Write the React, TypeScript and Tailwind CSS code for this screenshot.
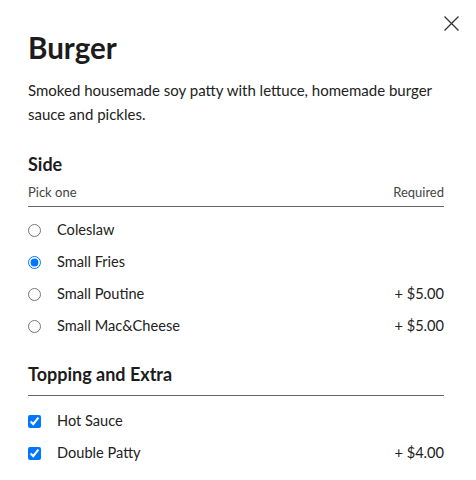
import React from "react";

function Row({ type, label, price, checked, name }: { type: "radio" | "checkbox"; label: string; price?: string; checked?: boolean; name?: string }) {
  return (
    <label className="flex items-center h-8 text-[14.6px] text-[#222]">
      <input type={type} name={name} defaultChecked={checked} className="w-[13px] h-[13px] shrink-0" />
      <span className="ml-4 flex-1">{label}</span>
      {price && <span>{price}</span>}
    </label>
  );
}

export default function App() {
  return (
    <div className="w-[476px] h-[480px] bg-white relative" style={{ fontFamily: "Lato, 'Noto Sans', sans-serif" }}>
      <button className="absolute left-[444px] top-[16px] w-[15px] h-[15px]" aria-label="Close">
        <svg width="15" height="15" viewBox="0 0 15 15" stroke="#333" strokeWidth="1.3" fill="none">
          <path d="M0.5 0.5L14.5 14.5M14.5 0.5L0.5 14.5" />
        </svg>
      </button>
      <div className="pl-7 pr-8 pt-[28px]">
        <h1 className="text-[29.5px] font-bold text-[#1c1c1c] leading-[40px]">Burger</h1>
        <p className="mt-[10px] text-[15px] leading-[24px] text-[#222]">
          Smoked housemade soy patty with lettuce, homemade burger sauce and pickles.
        </p>
        <div className="mt-[26px]">
          <h2 className="text-[18px] font-bold text-[#1c1c1c] leading-6">Side</h2>
          <div className="flex justify-between text-[13px] text-[#444] leading-5 mt-[6px] pb-[4px] border-b border-[#666]">
            <span>Pick one</span>
            <span>Required</span>
          </div>
          <div className="mt-[7px]">
            <Row type="radio" name="side" label="Coleslaw" />
            <Row type="radio" name="side" label="Small Fries" checked />
            <Row type="radio" name="side" label="Small Poutine" price="+ $5.00" />
            <Row type="radio" name="side" label="Small Mac&Cheese" price="+ $5.00" />
          </div>
        </div>
        <div className="mt-[20px]">
          <h2 className="text-[18px] font-bold text-[#1c1c1c] leading-6 pb-[9px] border-b border-[#666]">Topping and Extra</h2>
          <div className="mt-[9px]">
            <Row type="checkbox" label="Hot Sauce" checked />
            <Row type="checkbox" label="Double Patty" price="+ $4.00" checked />
          </div>
        </div>
      </div>
    </div>
  );
}
